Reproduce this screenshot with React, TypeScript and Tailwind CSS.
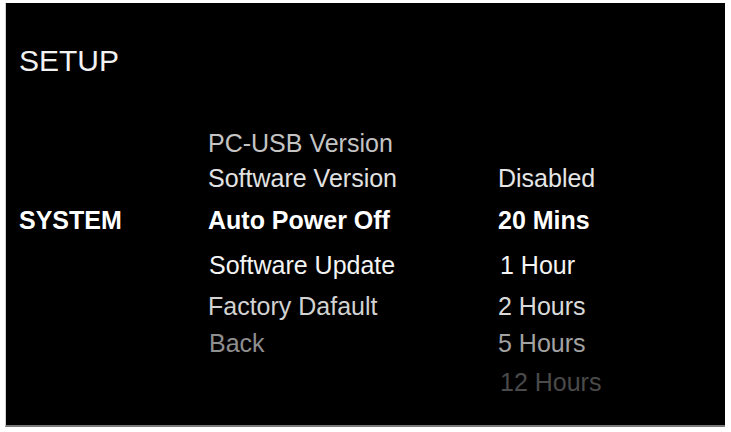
import React from 'react';

type Row = {
  label?: string;
  item?: string;
  value?: string;
  bold?: boolean;
  itemColor?: string;
  valueColor?: string;
  mt: string;
  itemShift?: string;
  valueShift?: string;
};

const ROWS: Row[] = [
  { item: 'PC-USB Version', itemColor: 'text-[#c4c4c4]', mt: 'mt-[50px]' },
  { item: 'Software Version', value: 'Disabled', itemColor: 'text-[#e2e2e2]', valueColor: 'text-[#e6e6e6]', mt: 'mt-[5px]' },
  { label: 'SYSTEM', item: 'Auto Power Off', value: '20 Mins', bold: true, itemColor: 'text-white', valueColor: 'text-white', mt: 'mt-[12px]' },
  { item: 'Software Update', value: '1 Hour', itemColor: 'text-[#f4f4f4]', valueColor: 'text-[#f4f4f4]', mt: 'mt-[15px]', itemShift: 'ml-px', valueShift: 'ml-[2px]' },
  { item: 'Factory Dafault', value: '2 Hours', itemColor: 'text-[#d2d2d2]', valueColor: 'text-[#dadada]', mt: 'mt-[11px]' },
  { item: 'Back', value: '5 Hours', itemColor: 'text-[#8f8f8f]', valueColor: 'text-[#a2a2a2]', mt: 'mt-[7px]', itemShift: 'ml-px' },
  { value: '12 Hours', valueColor: 'text-[#4a4a4a]', mt: 'mt-[9px]', valueShift: 'ml-[2px]' },
];

export default function App() {
  return (
    <div className="w-[731px] h-[432px] bg-white pt-[3px] pl-[5px] font-['Liberation_Sans',Arial,sans-serif]">
      <div className="w-[720px] h-[424px] bg-black border-l border-l-[#cfcfcf] border-b-2 border-b-[#7a7a7a] pl-[13px]">
        <h1 className="pt-[41px] text-[30px] leading-[34px] text-[#f2f2f2]">SETUP</h1>

        {ROWS.map((row, i) => (
          <div key={i} className={`flex items-center h-[30px] text-[25px] leading-[30px] ${row.mt} ${row.bold ? 'font-bold' : ''}`}>
            <div className="w-[189px] text-white">{row.label}</div>
            <div className={`w-[290px] ${row.itemColor ?? ''}`}>
              <span className={row.itemShift}>{row.item}</span>
            </div>
            <div className={row.valueColor}>
              <span className={row.valueShift}>{row.value}</span>
            </div>
          </div>
        ))}
      </div>
    </div>
  );
}
